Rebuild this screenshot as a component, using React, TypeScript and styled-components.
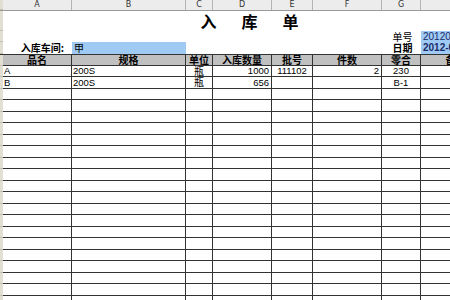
import React from "react";
import styled, { createGlobalStyle } from "styled-components";

const COLS = "3px 69px 114px 27px 59px 41px 69px 39px 70px";
const CJK = `"Noto Sans CJK SC", "Liberation Sans", sans-serif`;
const LAT = `"Liberation Sans", "Noto Sans CJK SC", sans-serif`;

const Global = createGlobalStyle`
  html, body { margin: 0; padding: 0; background: #fff; overflow: hidden; }
  body { font-family: ${LAT}; color: #000; }
`;

const Sheet = styled.div`
  width: 450px;
  height: 300px;
  overflow: hidden;
  background: #fff;
`;

const Inner = styled.div`
  width: 491px;
`;

const Row = styled.div<{ $h: number }>`
  display: grid;
  grid-template-columns: ${COLS};
  height: ${(p) => p.$h}px;
`;

const ColHeaderRow = styled(Row)`
  box-sizing: border-box;
  background: #ececec;
  border-bottom: 1px solid #9a9a9a;
`;

const ColLetter = styled.div`
  border-right: 1px solid #b4b4b4;
  font: 8px "DejaVu Sans", sans-serif;
  color: #333;
  display: flex;
  align-items: center;
  justify-content: center;
  line-height: 1;
`;

const Strip = styled.div`
  background: #e2ded2;
  border-bottom: 1px solid #c4c0b4;
  box-sizing: border-box;
`;

const Title = styled.div`
  grid-column: 3 / 9;
  display: flex;
  align-items: center;
  justify-content: center;
  gap: 25px;
  padding-left: 6px;
  font-family: ${CJK};
  font-size: 16px;
  font-weight: 700;
  line-height: 1;
`;

const InfoCell = styled.div<{ $align?: string; $blue?: boolean; $bold?: boolean; $pr?: number }>`
  display: flex;
  align-items: center;
  justify-content: ${(p) => p.$align || "flex-start"};
  padding: 0 ${(p) => p.$pr ?? 0}px 0 2px;
  background: ${(p) => (p.$blue ? "#9fcaf4" : "transparent")};
  font-family: ${CJK};
  font-size: 10px;
  font-weight: ${(p) => (p.$bold ? 700 : 400)};
  line-height: 1;
  white-space: nowrap;
`;

const Value = styled.span<{ $navy?: boolean; $bold?: boolean }>`
  font-family: ${LAT};
  font-size: 10px;
  font-weight: ${(p) => (p.$bold ? 700 : 400)};
  color: ${(p) => (p.$navy ? "#1c2c68" : "#000")};
`;

const Table = styled.div`
  display: grid;
  grid-template-columns: ${COLS};
  grid-template-rows: 10.5px;
  grid-auto-rows: 11.5px;
  border-top: 1px solid #333;
`;

const HeadCell = styled.div`
  box-sizing: border-box;
  background: #c0c0c0;
  border-right: 1px solid #333;
  border-bottom: 1px solid #333;
  display: flex;
  align-items: center;
  justify-content: center;
  font-family: ${CJK};
  font-size: 10px;
  font-weight: 700;
  line-height: 1;
  white-space: nowrap;
`;

const Cell = styled.div<{ $align?: "left" | "center" | "right"; $cjk?: boolean }>`
  box-sizing: border-box;
  border-right: 1px solid #333;
  border-bottom: 1px solid #333;
  display: flex;
  align-items: center;
  justify-content: ${(p) =>
    p.$align === "right" ? "flex-end" : p.$align === "center" ? "center" : "flex-start"};
  padding: ${(p) => (p.$align === "center" ? "0" : "0 2px 0 1px")};
  font-family: ${(p) => (p.$cjk ? CJK : LAT)};
  font-size: ${(p) => (p.$cjk ? "10px" : "9.5px")};
  font-weight: 400;
  line-height: 1;
  white-space: nowrap;
`;

const letters = ["A", "B", "C", "D", "E", "F", "G", "H"];
const heads = ["品名", "规格", "单位", "入库数量", "批号", "件数", "零合", "备注"];

type R = { a: string; b: string; c: string; d: string; e: string; f: string; g: string };
const data: R[] = [
  { a: "A", b: "200S", c: "瓶", d: "1000", e: "111102", f: "2", g: "230" },
  { a: "B", b: "200S", c: "瓶", d: "656", e: "", f: "", g: "B-1" },
];
const empty: R = { a: "", b: "", c: "", d: "", e: "", f: "", g: "" };
const rows: R[] = [...data, ...Array.from({ length: 22 }, () => empty)];

export default function App() {
  return (
    <Sheet>
      <Global />
      <Inner>
        <ColHeaderRow $h={11}>
          <Strip />
          {letters.map((l) => (
            <ColLetter key={l}>{l === "H" ? "" : l}</ColLetter>
          ))}
        </ColHeaderRow>

        <Row $h={20}>
          <Strip />
          <Title>
            <span>入</span>
            <span>库</span>
            <span>单</span>
          </Title>
        </Row>

        <Row $h={11}>
          <Strip />
          <InfoCell />
          <InfoCell />
          <InfoCell />
          <InfoCell />
          <InfoCell />
          <InfoCell />
          <InfoCell $align="center">单号</InfoCell>
          <InfoCell $blue>
            <Value $navy>2012032001</Value>
          </InfoCell>
        </Row>

        <Row $h={12}>
          <Strip />
          <InfoCell $align="flex-end" $bold $pr={8}>
            入库车间:
          </InfoCell>
          <InfoCell $blue>甲</InfoCell>
          <InfoCell />
          <InfoCell />
          <InfoCell />
          <InfoCell />
          <InfoCell $align="center" $bold>
            日期
          </InfoCell>
          <InfoCell $blue>
            <Value $navy $bold>
              2012-03-20
            </Value>
          </InfoCell>
        </Row>

        <Table>
          <Strip />
          {heads.map((h) => (
            <HeadCell key={h}>{h}</HeadCell>
          ))}
          {rows.map((r, i) => (
            <React.Fragment key={i}>
              <Strip />
              <Cell $align="left">{r.a}</Cell>
              <Cell $align="left">{r.b}</Cell>
              <Cell $align="center" $cjk>
                {r.c}
              </Cell>
              <Cell $align="right">{r.d}</Cell>
              <Cell $align="center">{r.e}</Cell>
              <Cell $align="right">{r.f}</Cell>
              <Cell $align="center">{r.g}</Cell>
              <Cell />
            </React.Fragment>
          ))}
        </Table>
      </Inner>
    </Sheet>
  );
}
